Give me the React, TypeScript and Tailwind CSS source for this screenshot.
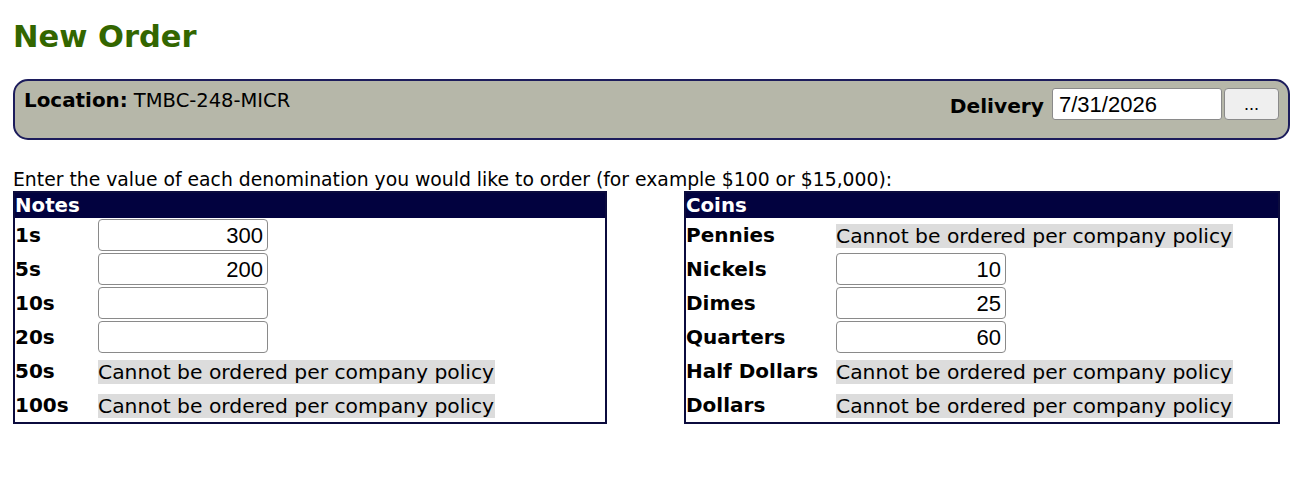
import React from "react";

type Row = { label: string; value?: string; blocked?: boolean };

const notes: Row[] = [
  { label: "1s", value: "300" },
  { label: "5s", value: "200" },
  { label: "10s", value: "" },
  { label: "20s", value: "" },
  { label: "50s", blocked: true },
  { label: "100s", blocked: true },
];

const coins: Row[] = [
  { label: "Pennies", blocked: true },
  { label: "Nickels", value: "10" },
  { label: "Dimes", value: "25" },
  { label: "Quarters", value: "60" },
  { label: "Half Dollars", blocked: true },
  { label: "Dollars", blocked: true },
];

const inputFont = { fontFamily: '"Liberation Sans", Arial, sans-serif' };

function Denominations({
  title,
  rows,
  labelWidth,
  width,
}: {
  title: string;
  rows: Row[];
  labelWidth: string;
  width: string;
}) {
  return (
    <div className={`${width} border-2 border-[#0b0b3d] bg-white`}>
      <div className="h-[25px] bg-[#02023f] text-white font-bold text-[19.8px] leading-[25px]">
        {title}
      </div>
      {rows.map((r) => (
        <div key={r.label} className="flex items-center h-[34px]">
          <div className={`${labelWidth} shrink-0 font-bold text-[20px] text-black`}>{r.label}</div>
          {r.blocked ? (
            <span className="bg-[#dcdcdc] text-[20.3px] leading-[24px] text-black pr-[1px] mt-[2px]">
              Cannot be ordered per company policy
            </span>
          ) : (
            <input
              readOnly
              value={r.value}
              className="w-[170px] h-[32px] border border-[#8a8a8a] rounded-[4px] bg-white text-right pr-[4px] text-[22px] text-black outline-none"
              style={inputFont}
            />
          )}
        </div>
      ))}
    </div>
  );
}

export default function App() {
  return (
    <div
      className="w-[1300px] h-[497px] bg-white text-black px-[13px] pt-[18px]"
      style={{ fontFamily: '"DejaVu Sans", Verdana, sans-serif' }}
    >
      <h1 className="text-[30.5px] font-bold text-[#336600] leading-[38px]">New Order</h1>

      <div className="mt-[23px] w-[1277px] h-[61px] rounded-[15px] border-2 border-[#1c1c5c] bg-[#b6b7a9] flex justify-between px-[9px] pt-[7px]">
        <div className="text-[19.5px] leading-[26px]">
          <span className="font-bold text-[19.9px]">Location:</span> TMBC-248-MICR
        </div>
        <div className="flex items-start gap-[8px]">
          <span className="font-bold text-[20.2px] leading-[32px] mt-[2px]">Delivery</span>
          <input
            readOnly
            value="7/31/2026"
            className="w-[170px] h-[32px] border border-[#8a8a8a] rounded-[3px] bg-white pl-[6px] text-[22px] text-black outline-none"
            style={inputFont}
          />
          <button
            className="-ml-[6px] w-[55px] h-[32px] border border-[#8a8a8a] rounded-[4px] bg-[#efefef] text-[18px] text-black"
            style={inputFont}
          >
            ...
          </button>
        </div>
      </div>

      <p className="mt-[28px] text-[18.8px] leading-[23px]">
        Enter the value of each denomination you would like to order (for example $100 or $15,000):
      </p>

      <div className="flex gap-[77px]">
        <Denominations title="Notes" rows={notes} labelWidth="w-[83px]" width="w-[594px]" />
        <Denominations title="Coins" rows={coins} labelWidth="w-[150px]" width="w-[596px]" />
      </div>
    </div>
  );
}
